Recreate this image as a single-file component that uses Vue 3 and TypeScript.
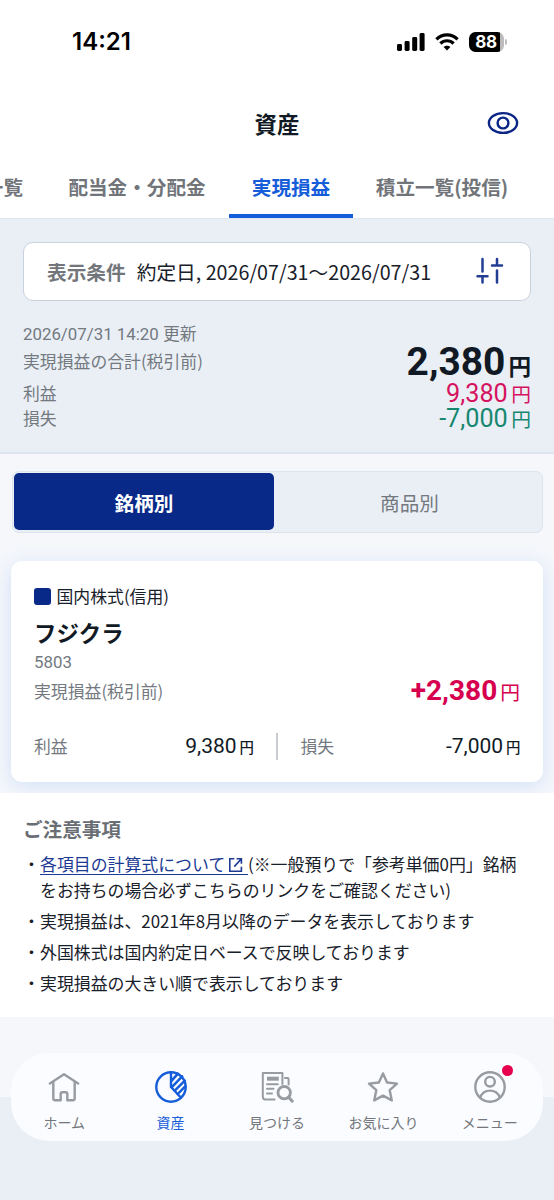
<script setup lang="ts">
interface Tab { label: string; active?: boolean; kind: string }
interface NavItem { label: string; icon: string; active?: boolean; badge?: boolean }

const tabs: Tab[] = [
  { label: '一覧', kind: 'first' },
  { label: '配当金・分配金', kind: 'dividend' },
  { label: '実現損益', kind: 'realized', active: true },
  { label: '積立一覧(投信)', kind: 'fund' },
]

const notes: string[] = [
  '実現損益は、2021年8月以降のデータを表示しております',
  '外国株式は国内約定日ベースで反映しております',
  '実現損益の大きい順で表示しております',
]

const nav: NavItem[] = [
  { label: 'ホーム', icon: 'home' },
  { label: '資産', icon: 'pie', active: true },
  { label: '見つける', icon: 'find' },
  { label: 'お気に入り', icon: 'star' },
  { label: 'メニュー', icon: 'user', badge: true },
]
</script>

<template>
  <div class="screen">
    <div class="status">
      <span class="clock">14:21</span>
      <div class="status-icons">
        <svg class="signal" width="28" height="18" viewBox="0 0 28 18">
          <rect x="0" y="11" width="5" height="7" rx="1.4" />
          <rect x="7.6" y="8" width="5" height="10" rx="1.4" />
          <rect x="15.2" y="4" width="5" height="14" rx="1.4" />
          <rect x="22.6" y="0" width="5" height="18" rx="1.4" />
        </svg>
        <svg class="wifi" width="24" height="18" viewBox="0 0 24 18">
          <path d="M1.4 6.4C7.3.4 16.7.4 22.6 6.4" fill="none" stroke="#000" stroke-width="3.2" />
          <path d="M5.4 10.5c3.7-3.7 9.5-3.7 13.2 0" fill="none" stroke="#000" stroke-width="3.2" />
          <path d="M8.6 14.1c1.9-1.9 4.9-1.9 6.8 0L12 17.6z" />
        </svg>
        <div class="battery"><span class="level">88</span></div>
        <span class="nub"></span>
      </div>
    </div>

    <header class="titlebar">
      <h1>資産</h1>
      <svg class="eye" width="32" height="24" viewBox="0 0 32 24">
        <ellipse cx="16" cy="12" rx="14.1" ry="9.9" />
        <circle cx="16" cy="12" r="5.4" />
      </svg>
    </header>

    <nav class="tabs">
      <div v-for="t in tabs" :key="t.label" class="tab" :class="[t.kind, { active: t.active }]">{{ t.label }}</div>
    </nav>

    <section class="summary">
      <div class="filter">
        <span class="filter-label">表示条件</span>
        <span class="filter-value">約定日, 2026/07/31〜2026/07/31</span>
        <svg class="sliders" width="28" height="28" viewBox="0 0 28 28">
          <path d="M6.5 2v12.4M1.5 19.2h10M6.5 19.2v6.4M21 2v6.4M16 8.4h10M21 13.4v12.2" />
        </svg>
      </div>
      <div class="updated">2026/07/31 14:20 更新</div>
      <div class="row total"><span>実現損益の合計(税引前)</span><b class="amount">2,380<i>円</i></b></div>
      <div class="row gain"><span>利益</span><span class="amount">9,380<i>円</i></span></div>
      <div class="row loss"><span>損失</span><span class="amount">-7,000<i>円</i></span></div>
    </section>

    <section class="holdings">
      <div class="segment">
        <div class="seg on">銘柄別</div>
        <div class="seg off">商品別</div>
      </div>
      <article class="card">
        <div class="category"><span class="swatch"></span>国内株式(信用)</div>
        <h2>フジクラ</h2>
        <div class="code">5803</div>
        <div class="result"><span>実現損益(税引前)</span><b class="amount">+2,380<i>円</i></b></div>
        <div class="split">
          <div class="half"><span>利益</span><span class="amount">9,380<i>円</i></span></div>
          <span class="divider"></span>
          <div class="half"><span>損失</span><span class="amount">-7,000<i>円</i></span></div>
        </div>
      </article>
    </section>

    <section class="notes">
      <h3>ご注意事項</h3>
      <ul>
        <li>
          <span class="dot">・</span>
          <p><a>各項目の計算式について<svg class="ext" width="16" height="16" viewBox="0 0 16 16"><path d="M6.3 1.8H1.8v12.4h11.6V9.8M8.6 1.8h4.8v5M13.2 2L6.3 9.6" /></svg></a><span class="after">(※一般預りで「参考単価0円」銘柄</span><br>をお持ちの場合必ずこちらのリンクをご確認ください)</p>
        </li>
        <li v-for="n in notes" :key="n"><span class="dot">・</span><p>{{ n }}</p></li>
      </ul>
    </section>

    <footer class="dock">
      <div class="pill">
        <div v-for="n in nav" :key="n.label" class="item" :class="{ active: n.active }">
          <div class="glyph">
            <svg width="34" height="34" viewBox="0 0 34 34">
              <g v-if="n.icon === 'home'">
                <path d="M2.9 13.6L17 4.3l14.1 9.3" />
                <path d="M6.3 12v16.6q0 1.6 1.6 1.6h5.8v-6.5q0-1.5 1.5-1.5h3.6q1.5 0 1.5 1.5v6.5h5.8q1.6 0 1.6-1.6V12" />
              </g>
              <g v-else-if="n.icon === 'pie'">
                <circle cx="17" cy="17" r="14.7" />
                <path d="M17 2.5V17l10 10.7" />
                <path d="M17.5 10.8l6.4-7.2M17.8 17.2L28.2 6.4M20.8 20.6L30.8 10.6M23.8 24l7.4-7.6" stroke-width="2.5" />
              </g>
              <g v-else-if="n.icon === 'find'" stroke-width="2">
                <path d="M14.6 29.6H6q-3.2 0-3.2-3.2V2.9h19.6V14" />
                <path d="M7 8.7h11.8" stroke-width="4" stroke-linecap="butt" />
                <path d="M7 14.2h10.8M7 18.8h6.5M7 23.4h5M24.9 8h2.5q1.2 0 1.2 1.2v5.3" />
                <circle cx="24.2" cy="22.7" r="6.2" stroke-width="2.8" />
                <path d="M28.8 27.5l3.4 3.6" stroke-width="3" />
              </g>
              <path v-else-if="n.icon === 'star'" d="M17 3.4l4.1 9.1 9.9 1.1-7.3 6.6 2.1 10.2-8.8-4.8-8.8 4.8 2.1-10.2L3 13.6l9.9-1.1z" />
              <g v-else>
                <circle cx="17" cy="17" r="14.7" />
                <circle cx="17" cy="11.7" r="4.8" />
                <path d="M7.2 27.3C9 23 12.6 20.6 17 20.6s8 2.4 9.8 6.7" />
              </g>
            </svg>
            <span v-if="n.badge" class="badge"></span>
          </div>
          <span class="caption">{{ n.label }}</span>
        </div>
      </div>
    </footer>
  </div>
</template>

<style>
body { margin: 0; background: #fff; }
</style>

<style scoped>
.screen {
  width: 554px; height: 1200px; overflow: hidden; background: #fff; color: #111a24;
  font-family: "Noto Sans CJK JP", sans-serif; font-size: 16.85px;
  display: flex; flex-direction: column;
}
.screen * { box-sizing: border-box; }
h1, h2, h3, p, ul { margin: 0; padding: 0; }
i { font-style: normal; }

.status { height: 83px; flex: none; display: flex; align-items: center; justify-content: space-between; padding: 0 47px 0 72px; }
.clock { font: 600 24px/30px Inter, sans-serif; letter-spacing: 0; color: #000; }
.status-icons { display: flex; align-items: center; }
.wifi { margin: 0 10px 0 10px; }
.battery {
  width: 35px; height: 20px; border-radius: 6.5px;
  background: linear-gradient(90deg, #000 31px, #bbb 31px);
}
.level { display: block; width: 34px; text-align: center; color: #fff; font: 700 17px/20.5px Inter, sans-serif; letter-spacing: -0.3px; }
.nub { width: 2px; height: 6px; margin-left: 1px; border-radius: 0 3px 3px 0; background: #bbb; }

.titlebar { height: 80px; flex: none; display: flex; align-items: center; justify-content: center; position: relative; }
h1 { font-size: 22.4px; line-height: 30px; font-weight: 700; }
.eye { position: absolute; right: 35px; top: 28px; fill: none; stroke: #0a2585; stroke-width: 2.4; }

.tabs { height: 56px; flex: none; display: flex; border-bottom: 1px solid #dfe5ee; font-size: 19.6px; font-weight: 700; line-height: 48px; color: #71757a; white-space: nowrap; }
.tab { height: 55px; flex: none; text-align: center; }
.tab.first { width: 45px; text-align: right; padding-right: 22px; direction: rtl; }
.tab.dividend { width: 184px; }
.tab.realized { width: 124px; }
.tab.fund { width: 178px; }
.tab.active { color: #155dd9; border-bottom: 4px solid #155dd9; }

.summary { height: 235px; flex: none; padding: 23px 23px 0; background: #eaeff6; border-bottom: 2px solid #dfe5ee; color: #73797f; }
.filter { height: 59px; border: 1.5px solid #c8d1de; border-radius: 10px; background: #fff; display: flex; align-items: center; padding: 1px 26px 0 23px; font-size: 19.7px; line-height: 30px; }
.filter-label { font-weight: 700; color: #72767b; }
.filter-value { margin-left: 11px; color: #18202a; white-space: nowrap; }
.sliders { margin-left: auto; margin-top: -2px; fill: none; stroke: #223e94; stroke-width: 2.5; stroke-linecap: round; }
.updated { margin-top: 20px; height: 27px; line-height: 26px; font-family: Roboto, "Noto Sans CJK JP", sans-serif; }
.row { display: flex; justify-content: space-between; }
.row > span:first-child { line-height: 26px; }
.amount { font-family: Roboto, "Noto Sans CJK JP", sans-serif; white-space: nowrap; }
.amount i { font-family: "Noto Sans CJK JP", sans-serif; }
.row .amount { line-height: 27px; font-size: 25.2px; }
.row .amount i { font-size: 19.8px; margin-left: 3.5px; }
.total { height: 32px; }
.row.total .amount { line-height: 28px; color: #111a24; font-size: 38.9px; font-weight: 700; }
.row.total .amount i { font-size: 22.6px; margin-left: 3px; }
.gain { height: 25px; }
.gain .amount { color: #d5135f; }
.loss .amount { color: #17866f; }

.holdings { height: 339px; flex: none; padding: 17px 11px 0 12px; background: #f5f7fb; overflow: hidden; }
.segment { height: 62px; padding: 1px; border: 1.5px solid #dce4ee; border-radius: 7px; background: #eaeff6; display: flex; font-size: 19.6px; line-height: 60px; text-align: center; color: #73797f; }
.seg { flex: 1; height: 57px; }
.seg.off { padding-left: 4px; }
.seg.on { flex: none; width: 260px; border-radius: 5px; background: #082988; color: #fff; font-weight: 700; }
.card { margin-top: 28px; height: 221px; margin-left: -1px; border-radius: 11px; background: #fff; box-shadow: 0 4px 20px #d3e0f6; padding: 22px 23px 0; color: #73797f; }
.category { display: flex; align-items: center; height: 26px; line-height: 26px; color: #18202a; }
.swatch { width: 17px; height: 17px; margin-right: 5.5px; border-radius: 3px; background: #082988; }
h2 { font-size: 22.4px; line-height: 32px; height: 39px; padding-top: 7px; font-weight: 700; color: #111a24; }
.code { font-family: Roboto, sans-serif; height: 29px; line-height: 28px; }
.result { display: flex; justify-content: space-between; height: 42px; line-height: 27px; }
.result .amount { line-height: 28px; font-size: 28px; font-weight: 700; color: #d6004f; }
.result .amount i { font-size: 19.8px; font-weight: 400; margin-left: 3px; }
.split { display: flex; align-items: center; height: 54px; }
.half { flex: none; width: 220px; display: flex; justify-content: space-between; line-height: 28px; }
.half .amount { font-size: 21px; color: #111a24; }
.half .amount i { font-size: 14.4px; font-weight: 500; margin-left: 3px; }
.divider { flex: none; width: 1.5px; height: 27px; margin: 0 23px 0 22px; background: #c9ccd1; }

.notes { height: 224px; flex: none; padding: 22px 23px 0; background: #fff; color: #18202a; }
h3 { font-size: 19.6px; line-height: 28px; font-weight: 700; color: #696e74; }
ul { list-style: none; margin-top: 7.5px; }
li { display: flex; margin-bottom: 5px; line-height: 26px; white-space: nowrap; font-size: 16.9px; }
.dot { width: 17px; flex: none; }
a { color: #1c3a94; border-bottom: 1.2px solid #1c3a94; display: inline-block; line-height: 20px; width: 208px; }
.ext { margin-left: 3px; vertical-align: -2px; fill: none; stroke: #1c3a94; stroke-width: 1.6; }

.dock { height: 183px; flex: none; padding: 36px 11px 0; background: linear-gradient(#f5f7fb 80px, #eaeff6 80px); }
.pill { height: 88px; border-radius: 38px; background: #fbfcff; display: flex; }
.item { flex: 1; display: flex; flex-direction: column; align-items: center; color: #73777c; font-size: 14px; }
.glyph { position: relative; height: 34px; margin-top: 17px; }
.glyph svg { display: block; fill: none; stroke: #989ca0; stroke-width: 2.4; stroke-linejoin: round; stroke-linecap: round; }
.caption { line-height: 20px; margin-top: 8px; }
.active .glyph svg { stroke: #155dd9; }
.item.active { color: #155dd9; }
.badge { position: absolute; right: -6px; top: -5px; width: 11px; height: 11px; border-radius: 50%; background: #e6004e; }
</style>
